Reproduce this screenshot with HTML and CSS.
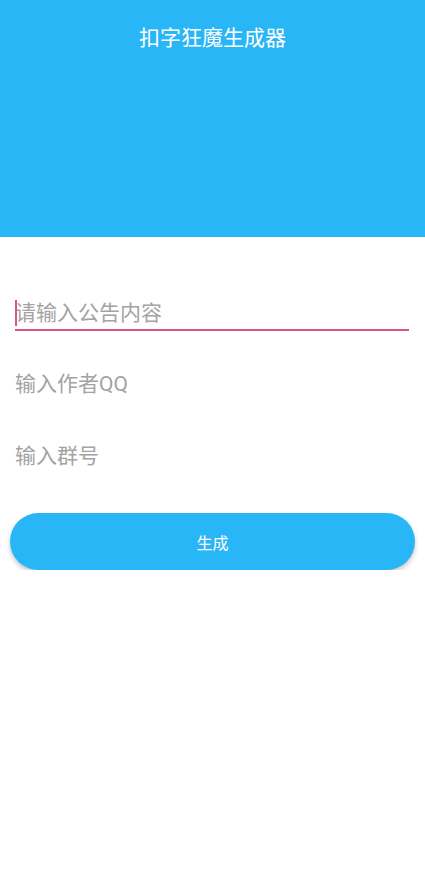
FILE: index.html
```html
<!DOCTYPE html>
<html>
<head>
  <meta charset="utf-8">
  <title>扣字狂魔生成器</title>
  <link rel="stylesheet" href="styles.css">
</head>
<body>

  <div class="header">
    <h1 class="title">扣字狂魔生成器</h1>
  </div>

  <form class="form" action="#" method="post">
    <div class="field field-active">
      <span class="cursor"></span>
      <input type="text" name="notice" placeholder="请输入公告内容">
    </div>
    <div class="field">
      <input type="text" name="qq" placeholder="输入作者QQ">
    </div>
    <div class="field">
      <input type="text" name="group" placeholder="输入群号">
    </div>

    <button type="button" class="btn">生成</button>
  </form>

</body>
</html>
```

FILE: styles.css
```css
body {
  margin: 0;
  font-family: Roboto, "Noto Sans CJK SC", sans-serif;
  background: #fff;
}

.header {
  background-color: #29b6f6;
  height: 237px;
  box-sizing: border-box;
  padding-top: 23px;
}

.title {
  margin: 0;
  text-align: center;
  color: #fff;
  font-size: 21px;
  font-weight: normal;
  line-height: 30px;
}

.form {
  padding: 59.5px 10px 0 10px;
}

.field {
  position: relative;
  margin: 0 6px 0 5px;
  height: 71.5px;
}

.field input {
  width: 100%;
  box-sizing: border-box;
  border: none;
  border-bottom: 2px solid transparent;
  padding: 0;
  height: 34px;
  font: 21px Roboto, "Noto Sans CJK SC", sans-serif;
  color: #333;
  background: transparent;
  outline: none;
}

.field input::placeholder {
  color: #a3a3a3;
}

.field-active input {
  border-bottom-color: #d9558a;
}

.cursor {
  position: absolute;
  left: 0;
  top: 3px;
  width: 2px;
  height: 26px;
  background: #d9558a;
}

.btn {
  display: block;
  width: 100%;
  height: 57px;
  margin-top: 2px;
  border: none;
  border-radius: 29px;
  background-color: #29b6f6;
  color: #fff;
  font: 16px Roboto, "Noto Sans CJK SC", sans-serif;
  box-shadow: 0 3px 5px rgba(0, 0, 0, 0.22);
  cursor: pointer;
}
```
